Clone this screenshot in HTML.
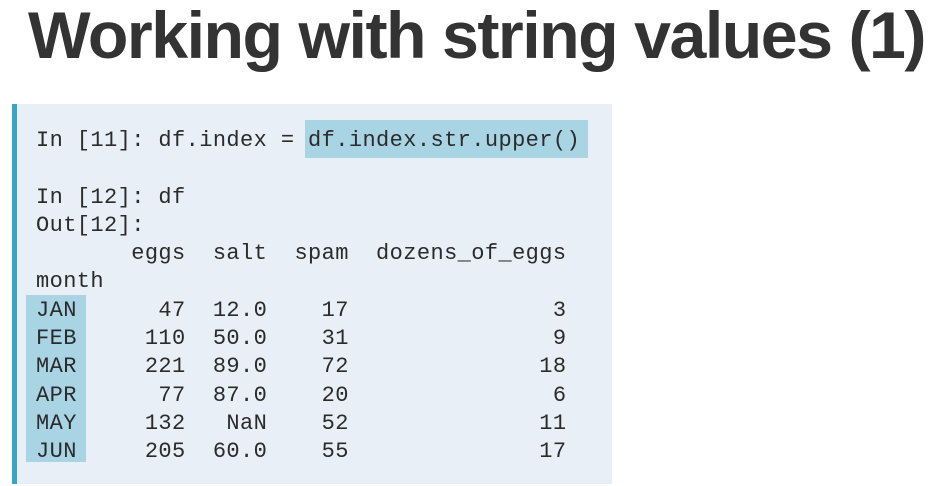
<!DOCTYPE html>
<html><head><meta charset="utf-8"><style>
html,body{margin:0;padding:0;background:#fff;width:942px;height:486px;overflow:hidden;position:relative}
.t{position:absolute;left:28px;top:-3px;font-family:"Liberation Sans",sans-serif;font-weight:bold;font-size:66px;color:#333;white-space:nowrap;transform-origin:0 0;letter-spacing:-1.5px}
.box{position:absolute;left:12px;top:104px;width:600px;height:380px;background:#e8eff6;border-left:5px solid #3aa3c9;box-sizing:border-box}
.hl{position:absolute;background:#a8d4e4}
pre{position:absolute;left:36px;top:0;margin:0;font-family:"Liberation Mono",monospace;font-size:22px;letter-spacing:0.4px;line-height:28.3px;color:#2b2b2b}
</style></head><body>
<div class="t" id="t">Working with string values (1)</div>
<div class="box"></div>
<div class="hl" style="left:305px;top:120px;width:283px;height:38px"></div>
<div class="hl" style="left:26px;top:295px;width:60px;height:167px"></div>
<pre style="top:127px">In [11]: df.index = df.index.str.upper()

In [12]: df
Out[12]:
       eggs  salt  spam  dozens_of_eggs
month
JAN      47  12.0    17               3
FEB     110  50.0    31               9
MAR     221  89.0    72              18
APR      77  87.0    20               6
MAY     132   NaN    52              11
JUN     205  60.0    55              17</pre>
<script>
var t=document.getElementById('t');var w=t.getBoundingClientRect().width;t.style.transform='scaleX('+(897/w)+')';
</script>
</body></html>
